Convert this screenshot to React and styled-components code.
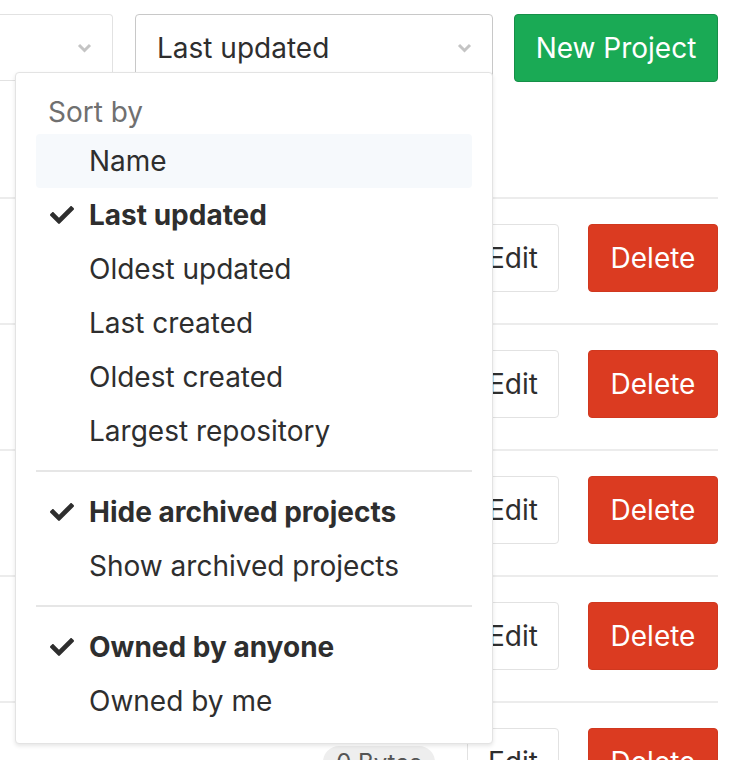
import React from "react";
import styled, { createGlobalStyle } from "styled-components";
import { FaCheck } from "react-icons/fa";

const GlobalStyle = createGlobalStyle`
  html, body {
    margin: 0;
    padding: 0;
    background: #fff;
    font-family: Inter, "Noto Sans", "Liberation Sans", sans-serif;
    color: #2e2e2e;
    overflow: hidden;
  }
  * { box-sizing: border-box; }
`;

const Page = styled.div`
  position: relative;
  width: 730px;
  height: 760px;
  overflow: hidden;
`;

const Toolbar = styled.div`
  display: flex;
  align-items: flex-start;
  padding: 14px 12px 0 0;
  height: 197px;
`;

const Select = styled.div`
  display: flex;
  align-items: center;
  justify-content: space-between;
  width: ${(p) => p.width}px;
  height: 67px;
  margin-right: ${(p) => p.gap}px;
  padding: 0 20px 0 21px;
  background: #fff;
  border: 1px solid ${(p) => (p.dark ? "#c8c8c8" : "#e2e2e2")};
  border-radius: 4px;
  font-size: 28px;
  color: #2e2e2e;
  ${(p) => p.clipped && "border-left: none; border-radius: 0 4px 4px 0;"}
`;

const Chevron = styled.svg`
  width: 15px;
  height: 10px;
  flex-shrink: 0;
`;

const Button = styled.div`
  display: flex;
  align-items: center;
  justify-content: center;
  height: 68px;
  width: ${(p) => p.width}px;
  border-radius: 4px;
  font-size: 28px;
  background: ${(p) => p.bg};
  color: ${(p) => p.color};
  border: 1px solid ${(p) => p.border};
  flex-shrink: 0;
`;

const List = styled.ul`
  list-style: none;
  margin: 0;
  padding: 0 12px 0 0;
`;

const Row = styled.li`
  display: flex;
  align-items: center;
  justify-content: flex-end;
  height: 126px;
  padding: 25px 0 31px;
  border-top: 2px solid #ececec;
  gap: 29px;
`;

const Pill = styled.span`
  display: inline-flex;
  align-items: center;
  justify-content: center;
  width: 112px;
  height: 32px;
  margin-right: 3px;
  border-radius: 16px;
  background: #eeeeee;
  color: #555;
  font-size: 24px;
`;

const Dropdown = styled.div`
  position: absolute;
  left: 15px;
  top: 72px;
  width: 478px;
  padding: 16px 20px 15px;
  background: #fff;
  border: 1px solid #e3e3e3;
  border-radius: 4px;
  box-shadow: 0 2px 4px rgba(0, 0, 0, 0.1);
`;

const Header = styled.div`
  height: 45px;
  padding: 6px 0 0 12px;
  font-size: 28px;
  line-height: 34px;
  color: #707070;
`;

const Item = styled.div`
  position: relative;
  display: flex;
  align-items: center;
  height: 54px;
  padding-left: 53px;
  font-size: 28px;
  font-weight: ${(p) => (p.active ? 700 : 400)};
  color: #2e2e2e;
  border-radius: 4px;
  background: ${(p) => (p.hover ? "#f6f9fc" : "transparent")};
`;

const Check = styled(FaCheck)`
  position: absolute;
  left: 14px;
  top: 15px;
  width: 24px;
  height: 24px;
  color: #2e2e2e;
`;

const Divider = styled.div`
  height: 2px;
  margin: 12px 0 13px;
  background: #e6e6e6;
`;

const ChevronIcon = () => (
  <Chevron viewBox="0 0 15 10">
    <path d="M2 2 L7.5 7.5 L13 2" fill="none" stroke="#c4c4c4" strokeWidth="3" />
  </Chevron>
);

const sortItems = [
  { label: "Name", hover: true },
  { label: "Last updated", active: true },
  { label: "Oldest updated" },
  { label: "Last created" },
  { label: "Oldest created" },
  { label: "Largest repository" },
];

const archiveItems = [
  { label: "Hide archived projects", active: true },
  { label: "Show archived projects" },
];

const ownerItems = [
  { label: "Owned by anyone", active: true },
  { label: "Owned by me" },
];

const renderItems = (items) =>
  items.map((it) => (
    <Item key={it.label} active={it.active} hover={it.hover}>
      {it.active && <Check />}
      {it.label}
    </Item>
  ));

export default function App() {
  return (
    <Page>
      <GlobalStyle />
      <Toolbar>
        <Select width={113} gap={22} clipped>
          <span />
          <ChevronIcon />
        </Select>
        <Select width={358} gap={21} dark>
          <span>Last updated</span>
          <ChevronIcon />
        </Select>
        <Button width={204} bg="#1aaa55" border="#168f48" color="#fff">
          New Project
        </Button>
      </Toolbar>

      <List>
        {[0, 1, 2, 3, 4].map((i) => (
          <Row key={i}>
            <Pill>0 Bytes</Pill>
            <Button width={92} bg="#fff" border="#e2e2e2" color="#2e2e2e">
              Edit
            </Button>
            <Button width={130} bg="#db3b21" border="#d0381f" color="#fff">
              Delete
            </Button>
          </Row>
        ))}
      </List>

      <Dropdown>
        <Header>Sort by</Header>
        {renderItems(sortItems)}
        <Divider />
        {renderItems(archiveItems)}
        <Divider />
        {renderItems(ownerItems)}
      </Dropdown>
    </Page>
  );
}
